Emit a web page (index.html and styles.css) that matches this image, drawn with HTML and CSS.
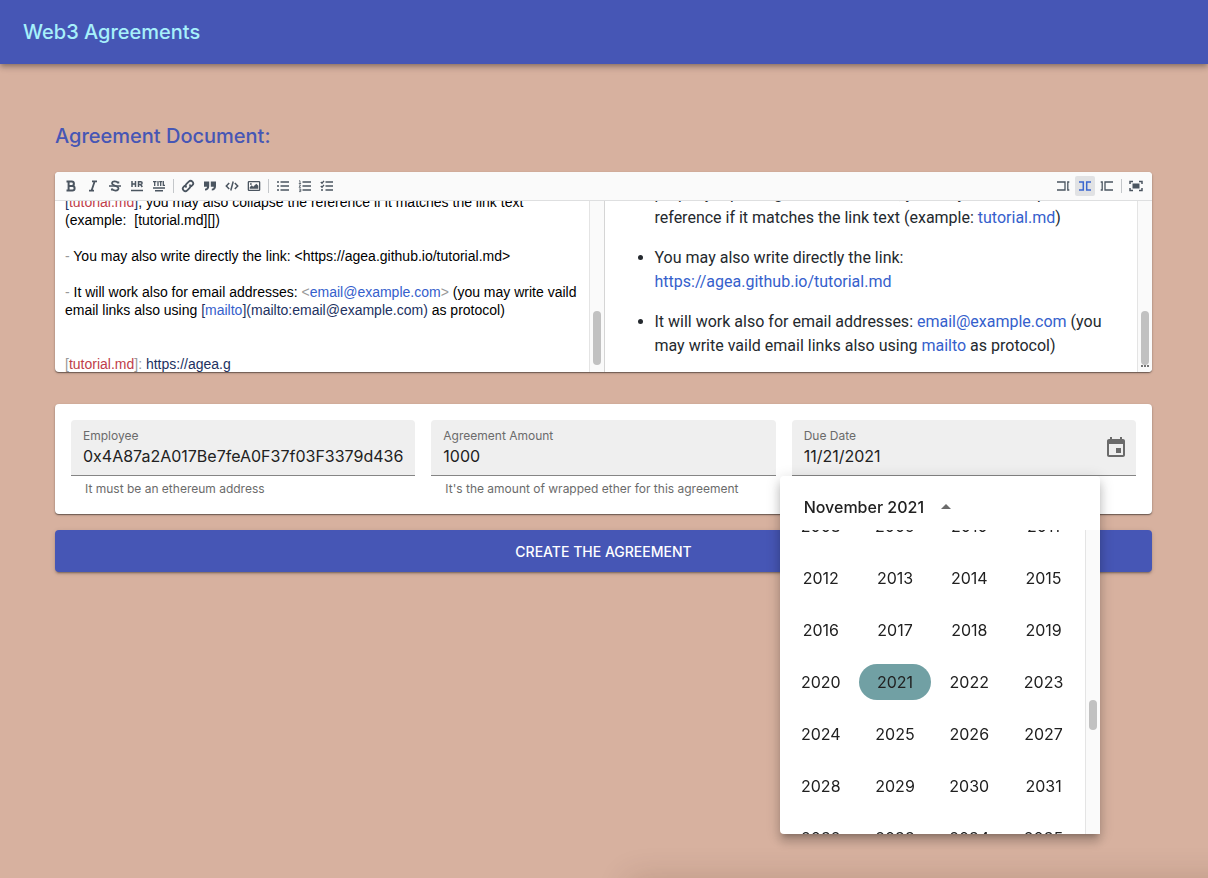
FILE: index.html
```
<!DOCTYPE html>
<html lang="en">
<head>
<meta charset="utf-8">
<title>Web3 Agreements</title>
<link rel="stylesheet" href="styles.css">
</head>
<body>
<header class="appbar"><h1 class="brand">Web3 Agreements</h1></header>
<main class="content">
  <h2 class="section-title">Agreement Document:</h2>

  <section class="editor">
    <div class="toolbar">
      <div class="tools">
        <button class="tool" aria-label="Bold"><svg viewBox="0 0 14 14"><path d="M2.500 2.500h5.200a2.200 2.200 0 0 1 0 4.400H4.500h3.800a2.300 2.300 0 0 1 0 4.600H2.500M4.600 2.500v9" stroke-width="2"/></svg></button>
        <button class="tool" aria-label="Italic"><svg viewBox="0 0 14 14"><path d="M6 2.300h5M3 11.700h5M8.700 2.300l-3.200 9.400" stroke-width="1.800"/></svg></button>
        <button class="tool" aria-label="Strikethrough"><svg viewBox="0 0 14 14"><path d="M10.400 4.600V2.500M10 4C9 2 4 1.600 4 4.300c0 2.600 6.500 2.200 6.500 5 0 3-5.500 2.900-6.600.4M3.800 11.500v-2" stroke-width="1.700"/><path d="M1 7h12" stroke-width="1.300"/></svg></button>
        <button class="tool" aria-label="Horizontal rule"><svg viewBox="0 0 14 14"><path d="M2 2v6M5.500 2v6M2 5h3.500M8.500 8V2.700h2.200a1.300 1.300 0 0 1 0 2.800H8.500M10.600 5.500L12.300 8" stroke-width="1.500"/><path d="M1 11.500h12" stroke-width="1.500"/></svg></button>
        <button class="tool" aria-label="Title"><svg viewBox="0 0 14 14"><path d="M1 2.700h3.500M2.700 2.700V7M6 2v5M7.200 2.700h3M8.700 2.700V7M11.300 2v4.400H13" stroke-width="1.300"/><path d="M1 9h12M3 11.700h8" stroke-width="1.500"/></svg></button>
        <span class="divider"></span>
        <button class="tool" aria-label="Link"><svg viewBox="0 0 14 14"><path d="M5.500 8.500a2.600 2.600 0 0 1 0-3.600l2.300-2.300a2.500 2.500 0 0 1 3.600 3.600L9.900 7.700M8.500 5.500a2.600 2.600 0 0 1 0 3.600l-2.300 2.300a2.500 2.500 0 0 1-3.600-3.600l1.500-1.500" stroke-width="1.800"/></svg></button>
        <button class="tool" aria-label="Quote"><svg viewBox="0 0 14 14"><path class="solid" d="M1 2.500h5.200v4.700c0 2.600-1.500 4.300-4.200 4.300V9.700c1.300 0 2-.7 2-2H1zM7.800 2.500H13v4.700c0 2.600-1.500 4.300-4.200 4.300V9.700c1.300 0 2-.7 2-2h-3z"/></svg></button>
        <button class="tool" aria-label="Code"><svg viewBox="0 0 14 14"><path d="M4.200 4L1.300 7l2.900 3M9.800 4l2.900 3-2.900 3M8.200 2.500l-2.400 9" stroke-width="1.500"/></svg></button>
        <button class="tool" aria-label="Image"><svg viewBox="0 0 14 14"><path class="solid" fill-rule="evenodd" d="M2 2h10A1.300 1.300 0 0 1 13.300 3.300v7.400A1.300 1.300 0 0 1 12 12H2A1.300 1.300 0 0 1 .7 10.700V3.300A1.300 1.300 0 0 1 2 2zM2 3.300v7.400h10V3.300z"/><path class="solid" d="M2.700 9.800V8.300l2-2 1.500 1.500L9.300 4.700l2 2v3.100zM3 4.200h1.700v1.600H3z"/></svg></button>
        <span class="divider"></span>
        <button class="tool" aria-label="Bullet list"><svg viewBox="0 0 14 14"><path d="M4.500 3H13M4.500 7H13M4.500 11H13M1 3h2M1 7h2M1 11h2" stroke-width="1.700"/></svg></button>
        <button class="tool" aria-label="Numbered list"><svg viewBox="0 0 14 14"><path d="M4.500 3H13M4.500 7H13M4.500 11H13" stroke-width="1.700"/><path d="M1 1.800h1v2.700M.8 4.500h2.300M1 6h1.600L1 8.300h2M1 10h1.800v2.600H1M1.300 11.300h1.500" stroke-width=".8"/></svg></button>
        <button class="tool" aria-label="Task list"><svg viewBox="0 0 14 14"><path d="M5.500 3H13M5.500 7H13M5.500 11H13" stroke-width="1.700"/><path d="M.8 3l1.200 1.200 2-2.400M.8 7L2 8.200l2-2.400M1 11h2" stroke-width="1.300"/></svg></button>
      </div>
      <div class="tools">
        <button class="tool" aria-label="Edit only"><svg viewBox="0 0 14 14"><path d="M1 3h8v8H1M13.300 3h-1.500v8h1.500" stroke-width="1.300"/></svg></button>
        <button class="tool active" aria-label="Split view"><svg viewBox="0 0 14 14"><path d="M1 3h4.300v8H1M13 3H8.700v8H13" stroke-width="1.500"/></svg></button>
        <button class="tool" aria-label="Preview only"><svg viewBox="0 0 14 14"><path d="M.7 3h1.500v8H.7M13 3H5v8h8" stroke-width="1.300"/></svg></button>
        <span class="divider"></span>
        <button class="tool" aria-label="Fullscreen"><svg viewBox="0 0 14 14"><path d="M1 5V2.500h3M10 2.500h3V5M13 9v2.500h-3M4 11.500H1V9" stroke-width="1.500"/><path class="solid" d="M3.500 4.500h7v5h-7z"/></svg></button>
      </div>
    </div>
    <div class="panes">
      <div class="pane">
        <div class="source">
          <div class="source-text"><span class="nav">[</span><span class="red">tutorial.md</span><span class="nav">]</span>, you may also collapse the reference if it matches the link text
(example:  [tutorial.md][])

<span class="grey">-</span> You may also write directly the link: &lt;https://agea.github.io/tutorial.md&gt;

<span class="grey">-</span> It will work also for email addresses: <span class="grey">&lt;</span><span class="blue">email@example.com</span><span class="grey">&gt;</span> (you may write vaild email links also using <span class="nav">[<span class="blue">mailto</span>](mailto:email@example.com)</span> as protocol)


<span class="grey">[</span><span class="red">tutorial.md</span><span class="grey">]:</span> <span class="nav">https://agea.g</span></div>
        </div>
        <div class="track track-end"><span class="thumb thumb-tall"></span></div>
      </div>
      <div class="pane">
        <div class="preview">
          <ul class="doc-list">
            <li>properly repeating it as tutorial.md, you may also collapse the<br>reference if it matches the link text (example: <a href="#">tutorial.md</a>)</li>
            <li>You may also write directly the link: <a href="#">https://agea.github.io/tutorial.md</a></li>
            <li>It will work also for email addresses: <a href="#">email@example.com</a> (you may write vaild email links also using <a href="#">mailto</a> as protocol)</li>
          </ul>
        </div>
        <div class="track track-end"><span class="thumb thumb-tall"></span><span class="grip"></span></div>
      </div>
    </div>
  </section>

  <form class="agreement">
    <div class="card">
      <div class="field">
        <div class="filled">
          <label for="employee">Employee</label>
          <input id="employee" type="text" value="0x4A87a2A017Be7feA0F37f03F3379d436">
        </div>
        <p class="helper">It must be an ethereum address</p>
      </div>
      <div class="field">
        <div class="filled">
          <label for="amount">Agreement Amount</label>
          <input id="amount" type="text" value="1000">
        </div>
        <p class="helper">It's the amount of wrapped ether for this agreement</p>
      </div>
      <div class="field">
        <div class="filled with-icon">
          <label for="due">Due Date</label>
          <input id="due" type="text" value="11/21/2021">
          <button type="button" class="calendar" aria-label="Choose date"><svg viewBox="0 0 24 24"><path d="M17 12h-5v5h5v-5zM16 1v2H8V1H6v2H5c-1.110 0-1.990.9-1.990 2L3 19c0 1.100.89 2 2 2h14c1.100 0 2-.9 2-2V5c0-1.100-.9-2-2-2h-1V1h-2zm3 18H5V8h14v11z"/></svg></button>
        </div>
        <div class="picker">
          <button type="button" class="picker-head">November 2021 <svg class="caret" viewBox="0 0 24 24"><path d="M7 14l5-5 5 5z"/></svg></button>
          <div class="picker-body">
            <div class="years">
              <button type="button">2008</button><button type="button">2009</button><button type="button">2010</button><button type="button">2011</button>
              <button type="button">2012</button><button type="button">2013</button><button type="button">2014</button><button type="button">2015</button>
              <button type="button">2016</button><button type="button">2017</button><button type="button">2018</button><button type="button">2019</button>
              <button type="button">2020</button><button type="button" class="selected">2021</button><button type="button">2022</button><button type="button">2023</button>
              <button type="button">2024</button><button type="button">2025</button><button type="button">2026</button><button type="button">2027</button>
              <button type="button">2028</button><button type="button">2029</button><button type="button">2030</button><button type="button">2031</button>
              <button type="button">2032</button><button type="button">2033</button><button type="button">2034</button><button type="button">2035</button>
            </div>
            <div class="track"><span class="thumb thumb-short"></span></div>
          </div>
        </div>
      </div>
    </div>
    <button type="submit" class="submit">CREATE THE AGREEMENT</button>
  </form>
</main>
<div class="edge-shade"></div>
</body>
</html>
```
FILE: styles.css
```
* { box-sizing: border-box; }
body {
  margin: 0;
  min-height: 100vh;
  background: #d7b19f;
  font-family: Inter, "Liberation Sans", sans-serif;
  color: #212121;
}
button, input { font: inherit; color: inherit; border: 0; padding: 0; background: none; }
button { cursor: pointer; }
h1, h2, p, ul { margin: 0; }

.appbar {
  height: 64px;
  padding: 0 23px;
  display: flex;
  align-items: center;
  background: #4656b5;
  box-shadow: 0 2px 4px -1px rgba(0,0,0,.2), 0 4px 5px rgba(0,0,0,.14), 0 1px 10px rgba(0,0,0,.12);
}
.brand, .section-title { font-size: 20px; line-height: 32px; font-weight: 500; }
.brand { color: #a6f0fb; }
.content { padding: 56px 56px 0 55px; }
.section-title { color: #4656b5; margin-bottom: 20px; }

.editor {
  background: #fff;
  border-radius: 4px;
  overflow: hidden;
  box-shadow: 0 1px 1px rgba(0,0,0,.4), 0 1px 3px rgba(0,0,0,.2);
}
.toolbar {
  height: 29px;
  padding: 0 6px;
  display: flex;
  justify-content: space-between;
  align-items: center;
  background: #fafafa;
  border-bottom: 1px solid #dedfe0;
}
.tools { display: flex; align-items: center; gap: 2px; }
.tool {
  width: 20px;
  height: 20px;
  display: grid;
  place-items: center;
  border-radius: 2px;
  color: #4b5560;
}
.tool svg { width: 14px; height: 14px; fill: none; stroke: currentColor; }
.tool .solid { fill: currentColor; stroke: none; }
.tool.active { background: #e1e2e4; color: #3b67cf; }
.divider { width: 1px; height: 14px; margin: 0 2px; background: #c4c7ca; }

.panes { display: flex; height: 171px; }
.pane { flex: 1 1 0; min-width: 0; display: flex; }
.source, .preview {
  flex: 1;
  min-width: 0;
  display: flex;
  flex-direction: column;
  justify-content: flex-end;
  overflow: hidden;
}
.source {
  padding: 0 10px;
  font: 14px/18px "Liberation Sans", Arial, sans-serif;
  color: #000;
}
.source-text { white-space: pre-wrap; flex: none; margin-bottom: -1px; }
.nav { color: #22315f; }
.red { color: #c0404a; }
.blue { color: #3560cc; }
.grey { color: #999; }
.preview {
  padding: 0 20px 14px;
  border-left: 1px solid #d5d5d5;
  font: 16px/24px Roboto, "Liberation Sans", sans-serif;
  color: #24292e;
}
.doc-list { flex: none; padding-left: 30px; display: flex; flex-direction: column; gap: 16px; }
.doc-list a { color: #3560cc; text-decoration: none; }
.track {
  flex: none;
  width: 15px;
  display: flex;
  flex-direction: column;
  align-items: center;
  background: #fafafa;
  border-left: 1px solid #e4e4e4;
}
.track-end { justify-content: flex-end; padding-bottom: 7px; position: relative; }
.thumb { width: 8px; border-radius: 4px; background: #c1c1c1; }
.thumb-tall { height: 54px; }
.thumb-short { height: 30px; margin-top: 170px; }
.grip { position: absolute; bottom: 5px; width: 8px; border-top: 2px dotted #777; }

.card {
  margin-top: 32px;
  padding: 16px;
  display: grid;
  grid-template-columns: repeat(3, minmax(0, 1fr));
  gap: 16px;
  background: #fff;
  border-radius: 4px;
  box-shadow: 0 1px 1px rgba(0,0,0,.4), 0 1px 3px rgba(0,0,0,.2);
}
.field { position: relative; }
.filled {
  height: 56px;
  padding: 8px 12px 0;
  display: grid;
  grid-template-rows: 16px 24px;
  background: #efefef;
  border-bottom: 1px solid #858585;
  border-radius: 4px 4px 0 0;
}
.with-icon { grid-template-columns: 1fr 24px; padding-right: 8px; }
.filled label { font-size: 12px; line-height: 16px; color: #6b6b6b; }
.filled input { grid-column: 1; width: 100%; font-size: 16px; line-height: 24px; outline: 0; }
.calendar { grid-column: 2; grid-row: 1 / 3; align-self: center; height: 24px; }
.calendar svg { display: block; width: 24px; height: 24px; fill: #6b6b6b; }
.helper { margin: 3px 14px 0; font-size: 12px; line-height: 19px; color: #6b6b6b; }

.picker {
  position: absolute;
  z-index: 1;
  top: 56px;
  left: -12px;
  width: 320px;
  background: #fff;
  border-radius: 4px;
  box-shadow: 0 5px 5px -3px rgba(0,0,0,.2), 0 8px 10px 1px rgba(0,0,0,.14), 0 3px 14px 2px rgba(0,0,0,.12);
}
.picker-head {
  height: 54px;
  padding: 8px 24px 0;
  display: flex;
  align-items: center;
  gap: 10px;
  font-size: 16px;
  font-weight: 500;
}
.caret { width: 24px; height: 24px; fill: #6b6b6b; }
.picker-body { display: flex; height: 304px; overflow: hidden; border-radius: 0 0 0 4px; }
.years {
  flex: 1;
  padding: 0 4px;
  display: grid;
  grid-template-columns: repeat(4, 1fr);
  grid-auto-rows: 52px;
  align-content: center;
  justify-items: center;
  align-items: center;
}
.years button { width: 72px; height: 36px; border-radius: 18px; font-size: 16px; }
.years .selected { background: #71a0a4; }

.submit {
  width: 100%;
  height: 42px;
  margin-top: 16px;
  border-radius: 4px;
  background: #4656b5;
  color: #fff;
  font-size: 14px;
  font-weight: 500;
  box-shadow: 0 3px 1px -2px rgba(0,0,0,.2), 0 2px 2px rgba(0,0,0,.14), 0 1px 5px rgba(0,0,0,.12);
}

.edge-shade {
  position: fixed;
  left: 52%;
  right: -40px;
  top: 100%;
  height: 40px;
  box-shadow: 0 0 32px rgba(60,30,0,.16);
  pointer-events: none;
}
```
